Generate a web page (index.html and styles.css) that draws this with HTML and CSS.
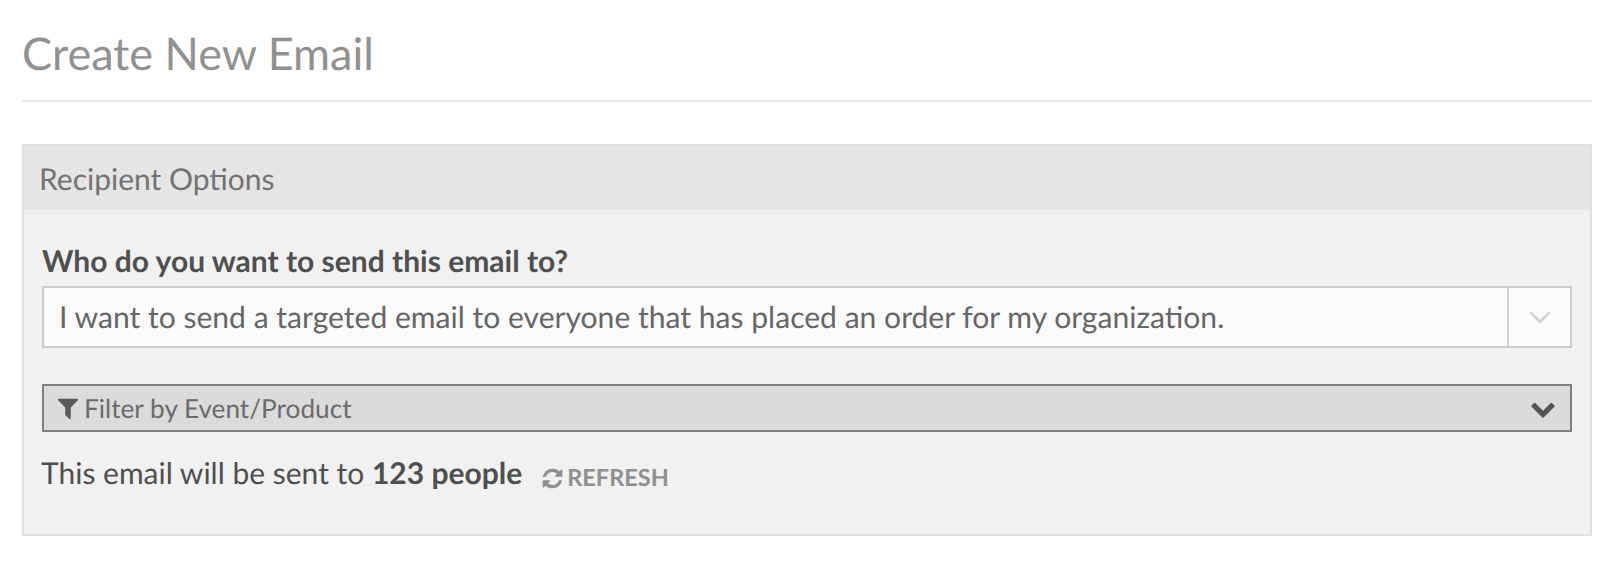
FILE: index.html
```html
<!DOCTYPE html>
<html lang="en">
<head>
    <meta charset="UTF-8">
    <title>Create New Email</title>
    <link rel="stylesheet" href="styles.css">
</head>
<body>

<div class="page">
    <h1 class="page-title">Create New Email</h1>

    <div class="panel">
        <div class="panel-heading">Recipient Options</div>
        <div class="panel-body">
            <label class="field-label">Who do you want to send this email to?</label>
            <div class="select-box">
                <div class="select-value">I want to send a targeted email to everyone that has placed an order for my organization.</div>
                <div class="select-arrow">
                    <svg class="thin-chevron" viewBox="0 0 20 12"><path d="M1.5 1.5L10 10l8.5-8.5"/></svg>
                </div>
            </div>

            <div class="filter-bar">
                <div class="filter-label">
                    <svg class="icon-filter" viewBox="0 0 1792 1792"><path d="M1595 295q17 41-14 70l-493 493v742q0 42-39 59-13 5-25 5-27 0-45-19l-256-256q-19-19-19-45v-486l-493-493q-31-29-14-70 17-39 59-39h1280q42 0 59 39z"/></svg>
                    <span>Filter by Event/Product</span>
                </div>
                <svg class="icon-chevron" viewBox="0 0 1792 1792"><path d="M1683 808l-742 741q-19 19-45 19t-45-19l-742-741q-19-19-19-45.5t19-45.5l166-165q19-19 45-19t45 19l531 531 531-531q19-19 45-19t45 19l166 165q19 19 19 45.5t-19 45.5z"/></svg>
            </div>

            <div class="summary">
                <span>This email will be sent to <strong>123 people</strong></span>
                <a class="refresh-link">
                    <svg class="icon-refresh" viewBox="0 0 1792 1792"><path d="M1639 1056q0 5-1 7-64 268-268 434.5t-478 166.5q-146 0-282.5-55t-243.5-157l-129 129q-19 19-45 19t-45-19-19-45v-448q0-26 19-45t45-19h448q26 0 45 19t19 45-19 45l-137 137q71 66 161 102t187 36q134 0 250-65t186-179q11-17 53-117 8-23 30-23h192q13 0 22.5 9.5t9.5 22.5zm25-800v448q0 26-19 45t-45 19h-448q-26 0-45-19t-19-45 19-45l138-138q-148-137-349-137-134 0-250 65t-186 179q-11 17-53 117-8 23-30 23h-199q-13 0-22.5-9.5t-9.5-22.5v-7q65-268 270-434.5t480-166.5q146 0 284 55.5t245 156.5l130-129q19-19 45-19t45 19 19 45z"/></svg>
                    REFRESH
                </a>
            </div>
        </div>
    </div>
</div>

</body>
</html>
```

FILE: styles.css
```css
html, body {
    margin: 0;
    padding: 0;
    background: white;
}
body {
    font-family: Lato, "Open Sans", sans-serif;
    color: #4f4f4f;
    text-rendering: geometricPrecision;
}
.page {
    padding: 0 26px 0 22px;
}
.page-title {
    margin: 0;
    padding: 27px 0 20px;
    height: 53px;
    font-size: 45px;
    line-height: 53px;
    font-weight: 400;
    color: #919191;
    border-bottom: 2px solid #e8e8e8;
    box-sizing: content-box;
}
.panel {
    margin-top: 42px;
    height: 392px;
    box-sizing: border-box;
    background-color: #f1f1f1;
    border: 2px solid #e0e0e0;
}
.panel-heading {
    height: 64px;
    padding-left: 15px;
    background-color: #e5e5e5;
    color: #737373;
    font-size: 30px;
    line-height: 66px;
}
.panel-body {
    padding: 30px 18px 0 18px;
}
.field-label {
    display: block;
    height: 46px;
    font-size: 30px;
    line-height: 43px;
    font-weight: 700;
}
.select-box {
    display: flex;
    height: 62px;
    box-sizing: border-box;
    background-color: #fbfbfb;
    border: 2px solid #cdcdcd;
}
.select-value {
    flex: 1;
    padding-left: 15px;
    font-size: 30.08px;
    line-height: 58px;
    color: #666666;
    border-right: 2px solid #d4d4d4;
}
.select-arrow {
    width: 61px;
    display: flex;
    align-items: center;
    justify-content: center;
}
.thin-chevron {
    width: 22px;
    height: 13px;
    fill: none;
    stroke: #d4d4d4;
    stroke-width: 2.6;
}
.filter-bar {
    display: flex;
    align-items: center;
    justify-content: space-between;
    height: 48px;
    box-sizing: border-box;
    margin-top: 36px;
    padding: 0 14px;
    background-color: #dbdbdb;
    border: 2px solid #808080;
}
.filter-label {
    display: flex;
    align-items: center;
    gap: 3px;
    margin-left: -3px;
    font-size: 26.2px;
    color: #6b6b6b;
}
.icon-filter {
    width: 26px;
    height: 26px;
    fill: #5a5a5a;
}
.icon-chevron {
    width: 26px;
    height: 26px;
    fill: #555555;
}
.summary {
    display: flex;
    align-items: center;
    margin-top: 15px;
    margin-left: -1px;
    font-size: 30px;
    line-height: 40px;
}
.summary strong {
    font-weight: 700;
}
.refresh-link {
    display: flex;
    align-items: center;
    gap: 3px;
    margin-left: 19px;
    margin-top: 11px;
    font-size: 23.5px;
    font-weight: 700;
    color: #8f8f8f;
}
.icon-refresh {
    width: 23px;
    height: 23px;
    fill: #8f8f8f;
}
```
